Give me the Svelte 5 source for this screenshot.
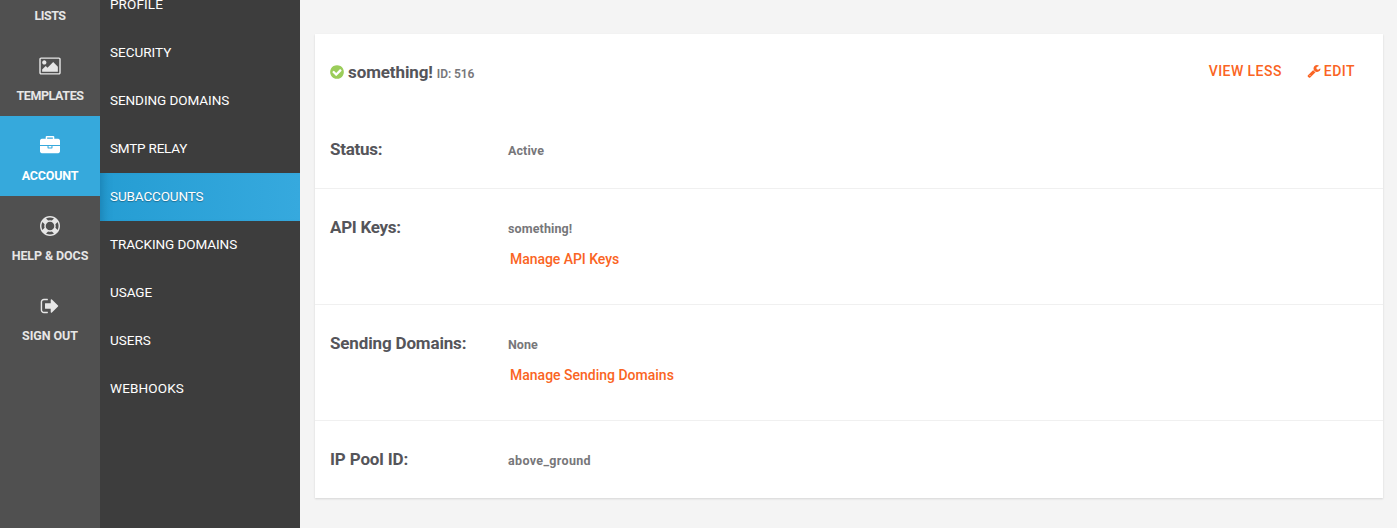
<script>
  const icons = {
    picture: 'M576 576q0 80-56 136t-136 56-136-56-56-136 56-136 136-56 136 56 56 136zm1024 384v448h-1408v-192l320-320 160 160 512-512zm96-704h-1600q-13 0-22.500 9.500t-9.500 22.500v1216q0 13 9.500 22.500t22.500 9.500h1600q13 0 22.500-9.500t9.500-22.500v-1216q0-13-9.500-22.500t-22.500-9.500zm160 32v1216q0 66-47 113t-113 47h-1600q-66 0-113-47t-47-113v-1216q0-66 47-113t113-47h1600q66 0 113 47t47 113z',
    briefcase: 'M640 256h512v-128h-512v128zm1152 640v480q0 66-47 113t-113 47h-1472q-66 0-113-47t-47-113v-480h672v160q0 26 19 45t45 19h320q26 0 45-19t19-45v-160h672zm-768 0v128h-256v-128h256zm768-480v384h-1792v-384q0-66 47-113t113-47h352v-160q0-40 28-68t68-28h576q40 0 68 28t28 68v160h352q66 0 113 47t47 113z',
    ring: 'M896 0q182 0 348 71t286 191 191 286 71 348-71 348-191 286-286 191-348 71-348-71-286-191-191-286-71-348 71-348 191-286 286-191 348-71zm0 128q-190 0-361 90l194 194q82-28 167-28t167 28l194-194q-171-90-361-90zm-678 1129l194-194q-28-82-28-167t28-167l-194-194q-90 171-90 361t90 361zm678 407q190 0 361-90l-194-194q-82 28-167 28t-167-28l-194 194q171 90 361 90zm0-384q159 0 271.500-112.500t112.500-271.500-112.500-271.500-271.500-112.500-271.500 112.500-112.500 271.500 112.500 271.500 271.500 112.500zm484-217l194 194q90-171 90-361t-90-361l-194 194q28 82 28 167t-28 167z',
    signout: 'M704 1440q0 4 1 20t.5 26.500-3 23.500-10 19.500-20.500 6.500h-320q-119 0-203.500-84.500t-84.500-203.500v-704q0-119 84.500-203.500t203.500-84.500h320q13 0 22.500 9.500t9.500 22.500q0 4 1 20t.5 26.500-3 23.500-10 19.500-20.500 6.500h-320q-66 0-113 47t-47 113v704q0 66 47 113t113 47h312l11.500 1 11.500 3 8 5.500 7 9 2 13.500zm928-544q0 26-19 45l-544 544q-19 19-45 19t-45-19-19-45v-288h-448q-26 0-45-19t-19-45v-384q0-26 19-45t45-19h448v-288q0-26 19-45t45-19 45 19l544 544q19 19 19 45z',
    wrench: 'M448 1472q0-26-19-45t-45-19-45 19-19 45 19 45 45 19 45-19 19-45zm644-420l-682 682q-37 37-90 37-52 0-91-37l-106-108q-38-36-38-90 0-53 38-91l681-681q39 98 114.500 173.500t173.500 114.500zm634-435q0 39-23 106-47 134-164.500 217.500t-258.500 83.500q-185 0-316.500-131.500t-131.500-316.500 131.500-316.500 316.500-131.500q58 0 121.500 16.500t107.500 46.500q16 11 16 28t-16 28l-293 169v224l193 107q5-3 79-48.500t135.500-81 70.500-35.500q15 0 23.500 10t8.500 25z',
    check: 'M1412 734q0-28-18-46l-91-90q-19-19-45-19t-45 19l-408 407-226-226q-19-19-45-19t-45 19l-91 90q-18 18-18 46 0 27 18 45l362 362q19 19 45 19 27 0 46-19l543-543q18-18 18-45zm252 162q0 209-103 385.500t-279.500 279.500-385.500 103-385.500-103-279.500-279.500-103-385.500 103-385.500 279.500-279.500 385.500-103 385.500 103 279.500 279.500 103 385.500z'
  };

  // `track` is the letter spacing of a label, in pixels
  const primary = [
    { label: 'LISTS', icon: null, track: -0.5 },
    { label: 'TEMPLATES', icon: 'picture', track: -0.4 },
    { label: 'ACCOUNT', icon: 'briefcase', track: -0.2, active: true },
    { label: 'HELP & DOCS', icon: 'ring', track: -0.1 },
    { label: 'SIGN OUT', icon: 'signout', track: -0.05 }
  ];

  const secondary = [
    { label: 'PROFILE', track: 0.1 },
    { label: 'SECURITY', track: 0 },
    { label: 'SENDING DOMAINS', track: -0.07 },
    { label: 'SMTP RELAY', track: -0.2 },
    { label: 'SUBACCOUNTS', track: -0.13, active: true },
    { label: 'TRACKING DOMAINS', track: -0.08 },
    { label: 'USAGE', track: -0.05 },
    { label: 'USERS', track: 0 },
    { label: 'WEBHOOKS', track: 0.15 }
  ];

  const rows = [
    { label: 'Status:', track: -0.25, value: 'Active', valueTrack: 0.1 },
    { label: 'API Keys:', track: -0.28, value: 'something!', valueTrack: 0.12, link: 'Manage API Keys', linkTrack: -0.05 },
    { label: 'Sending Domains:', track: -0.15, value: 'None', valueTrack: 0, link: 'Manage Sending Domains', linkTrack: 0 },
    { label: 'IP Pool ID:', track: -0.15, value: 'above_ground', valueTrack: 0.34 }
  ];
</script>

{#snippet glyph(name)}
  <svg class="glyph {name}" viewBox="0 0 1792 1792" aria-hidden="true"><path d={icons[name]} /></svg>
{/snippet}

<div class="page">
  <nav class="primary">
    {#each primary as item}
      <div class="tab" class:active={item.active}>
        <div class="tab-icon">{#if item.icon}{@render glyph(item.icon)}{/if}</div>
        <span style:letter-spacing="{item.track}px">{item.label}</span>
      </div>
    {/each}
  </nav>
  <nav class="secondary">
    {#each secondary as item}
      <div class="entry" class:active={item.active}>
        <span style:letter-spacing="{item.track}px">{item.label}</span>
      </div>
    {/each}
  </nav>
  <main>
    <section class="card">
      <header>
        {@render glyph('check')}
        <h2>something!</h2>
        <small>ID: 516</small>
        <div class="actions">
          <span class="less">VIEW LESS</span>
          <span class="edit">{@render glyph('wrench')}<span>EDIT</span></span>
        </div>
      </header>
      {#each rows as row}
        <div class="row" class:tall={row.link}>
          <div class="name"><span style:letter-spacing="{row.track}px">{row.label}</span></div>
          <div class="detail">
            <div class="value"><span style:letter-spacing="{row.valueTrack}px">{row.value}</span></div>
            {#if row.link}
              <div class="link"><span style:letter-spacing="{row.linkTrack}px">{row.link}</span></div>
            {/if}
          </div>
        </div>
      {/each}
    </section>
  </main>
</div>

<style>
  :global(body) {
    margin: 0;
    background: #f4f4f4;
  }
  .page {
    display: flex;
    height: 528px;
    overflow: hidden;
    font-family: Roboto, 'Liberation Sans', sans-serif;
    white-space: nowrap;
  }
  .glyph {
    display: block;
    width: 20px;
    height: 20px;
    flex: none;
    fill: currentColor;
    overflow: visible;
  }
  .primary {
    width: 100px;
    flex: none;
    background: #505050;
    color: #e6e6e6;
  }
  .tab {
    height: 80px;
    display: flex;
    flex-direction: column;
    align-items: center;
    font-size: 12.5px;
    line-height: 20px;
    font-weight: 700;
  }
  .tab:first-child {
    margin-top: -44px;
  }
  .tab.active {
    background: #36a9dc;
    color: #fff;
  }
  .tab-icon {
    height: 50px;
    padding-top: 20px;
    box-sizing: border-box;
  }
  .secondary {
    width: 200px;
    flex: none;
    background: #3d3d3d;
    color: #fff;
  }
  .entry {
    height: 48px;
    padding-left: 10px;
    font-size: 13.5px;
    line-height: 47px;
  }
  .entry:first-child {
    margin-top: -19px;
  }
  .entry.active {
    background: linear-gradient(to right, #259dd3, #36a9de);
    box-shadow: inset 11px 0 10px -8px rgba(0, 60, 100, 0.28);
    text-shadow: 0 1px 1px rgba(0, 0, 0, 0.3);
  }
  main {
    flex: 1;
    padding: 34px 14px 0 15px;
  }
  .card {
    background: #fff;
    height: 464px;
    box-shadow: 0 1px 2px rgba(0, 0, 0, 0.13);
  }
  header {
    display: flex;
    align-items: center;
    height: 76px;
    padding: 0 28px 0 14px;
    box-sizing: border-box;
  }
  .check {
    width: 16px;
    height: 16px;
    color: #9bcd5a;
  }
  h2 {
    margin: 0 4px 0 3px;
    font-size: 17px;
    line-height: 24px;
    letter-spacing: -0.1px;
    color: #55555a;
  }
  small {
    font-size: 12px;
    font-weight: 600;
    line-height: 20px;
    padding-top: 3px;
    letter-spacing: -0.1px;
    color: #77777a;
  }
  .actions {
    margin-left: auto;
    display: flex;
    gap: 25px;
    font-size: 14px;
    line-height: 20px;
    font-weight: 500;
    letter-spacing: 0.45px;
    color: #fa6423;
    padding-bottom: 2px;
  }
  .edit {
    display: flex;
    align-items: center;
    gap: 3px;
  }
  .wrench {
    width: 14px;
    height: 14px;
  }
  .row {
    display: flex;
    height: 78px;
    padding: 0 15px;
    box-sizing: border-box;
    border-bottom: 1px solid #f0f0f0;
  }
  header + .row {
    height: 79px;
  }
  header + .row .name {
    padding-top: 27px;
  }
  header + .row .detail {
    padding-top: 28px;
  }
  .row.tall {
    height: 116px;
  }
  .row:last-child {
    border-bottom: 0;
  }
  .name {
    width: 178px;
    flex: none;
    padding-top: 26px;
    font-size: 17px;
    line-height: 24px;
    font-weight: 700;
    color: #55555a;
  }
  .detail {
    padding-top: 27px;
  }
  .value {
    height: 26px;
    font-size: 12.5px;
    font-weight: 700;
    line-height: 26px;
    color: #77777a;
  }
  .link {
    margin: 7px 0 0 2px;
    font-size: 14px;
    line-height: 20px;
    font-weight: 500;
    color: #fa6423;
  }
</style>
